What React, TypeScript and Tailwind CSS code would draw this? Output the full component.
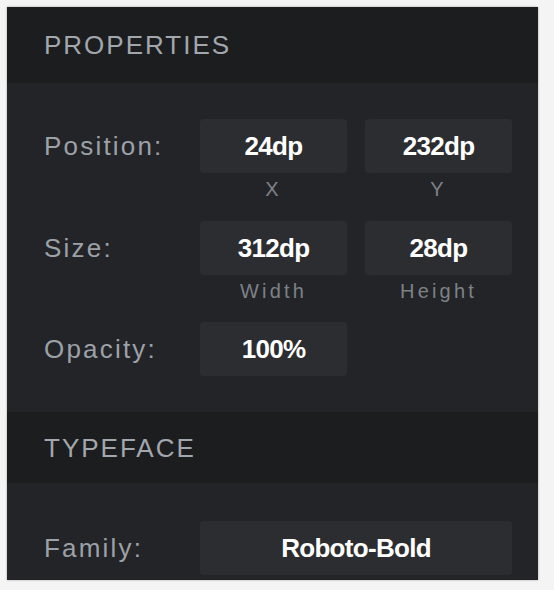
const font = { fontFamily: '"Liberation Sans", Arial, sans-serif' };

function SectionHeader({ title, h }: { title: string; h: string }) {
  return (
    <div className={`flex items-center bg-[#1c1d1f] pl-[37px] ${h}`}>
      <span className="text-[26px] leading-none tracking-[2px] text-[#a2a7ad]">{title}</span>
    </div>
  );
}

function Field({ value }: { value: string }) {
  return (
    <div className="flex h-[54px] items-center justify-center rounded-[4px] bg-[#2c2d30] text-[26px] font-bold tracking-[-0.7px] text-white">
      {value}
    </div>
  );
}

function Label({ text }: { text: string }) {
  return (
    <div className="flex h-[54px] items-center text-[26px] tracking-[2.2px] text-[#9ca1a7]">{text}</div>
  );
}

function Sub({ text }: { text: string }) {
  return (
    <div className="pt-[4px] text-center text-[20px] leading-[24px] tracking-[3.2px] text-[#7d8288]">{text}</div>
  );
}

export default function App() {
  return (
    <div className="h-[590px] w-[554px] overflow-hidden bg-[#f4f4f4] pt-[7px] pl-[7px]" style={font}>
      <div className="h-[573px] w-[531px] overflow-hidden bg-[#232427] shadow-[0_0_2px_rgba(0,0,0,0.35)]">
        <SectionHeader title="PROPERTIES" h="h-[76px]" />
        <div className="grid grid-cols-[138px_147px_147px] gap-x-[18px] pt-[36px] pb-[36px] pl-[37px]">
          <Label text="Position:" />
          <Field value="24dp" />
          <Field value="232dp" />
          <div className="h-[48px]" />
          <Sub text="X" />
          <Sub text="Y" />

          <Label text="Size:" />
          <Field value="312dp" />
          <Field value="28dp" />
          <div className="h-[47px]" />
          <Sub text="Width" />
          <Sub text="Height" />

          <Label text="Opacity:" />
          <Field value="100%" />
          <div />
        </div>
        <SectionHeader title="TYPEFACE" h="h-[71px]" />
        <div className="grid grid-cols-[138px_147px_147px] gap-x-[18px] pt-[38px] pl-[37px]">
          <Label text="Family:" />
          <div className="col-span-2">
            <Field value="Roboto-Bold" />
          </div>
        </div>
      </div>
    </div>
  );
}
